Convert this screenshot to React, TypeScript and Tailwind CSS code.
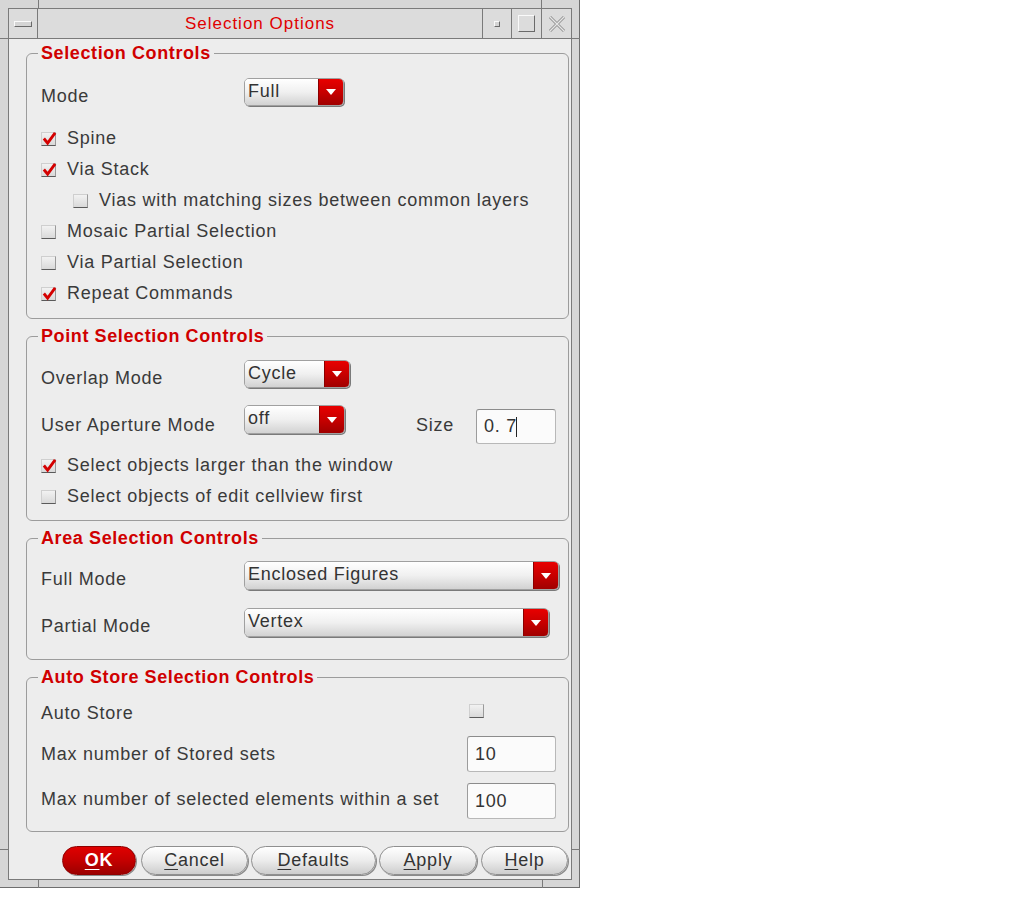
import React from "react";

const font = "font-['Liberation_Sans',Arial,sans-serif]";
const label = "text-[18px] leading-[21px] tracking-[0.75px] text-[#3a3a3a]";
const heading = "text-[18px] leading-[20px] font-bold tracking-[0.6px] text-[#d00000]";

function Check({ checked }: { checked?: boolean }) {
  return (
    <span className="relative inline-block w-[15px] h-[14px] shrink-0 bg-gradient-to-b from-[#f2f2f2] to-[#d9d9d9] border border-[#cfcfcf] border-b-[#5a5a5a] border-r-[#9a9a9a]">
      {checked && (
        <svg
          className="absolute left-[0px] top-[-2px]"
          width="15"
          height="15"
          viewBox="0 0 16 16"
        >
          <path
            d="M2 8 L6 13 L14 2"
            fill="none"
            stroke="#d40000"
            strokeWidth="3"
            strokeLinejoin="miter"
          />
        </svg>
      )}
    </span>
  );
}

function CheckRow({
  text,
  checked,
  indent,
}: {
  text: string;
  checked?: boolean;
  indent?: boolean;
}) {
  return (
    <div className={"flex items-center h-[31px] " + (indent ? "pl-[32px]" : "")}>
      <Check checked={checked} />
      <span className={label + " ml-[11px]"}>{text}</span>
    </div>
  );
}

function Dropdown({ text, className }: { text: string; className: string }) {
  return (
    <div
      className={
        "flex shrink-0 rounded-[5px] border border-[#a0a0a0] shadow-[1px_1px_0_#7a7a7a] overflow-hidden " +
        className
      }
    >
      <div className="flex-1 flex items-center pl-[3px] pb-[2px] bg-gradient-to-b from-[#ffffff] via-[#f0f0f0] to-[#d2d2d2]">
        <span className="text-[18px] leading-[21px] tracking-[0.75px] text-[#333]">
          {text}
        </span>
      </div>
      <div className="w-[25px] flex items-center justify-center bg-gradient-to-b from-[#e80000] via-[#c80000] to-[#a00000] border-l border-[#8a0000]">
        <svg width="10" height="6" viewBox="0 0 10 6">
          <path d="M0 0 H10 L5 6 Z" fill="#ffffff" />
        </svg>
      </div>
    </div>
  );
}

function Field({ text, className }: { text: string; className: string }) {
  return (
    <div
      className={
        "flex items-center pl-[7px] shrink-0 rounded-[3px] bg-[#fbfbfb] border border-[#b8b8b8] border-t-[#8c8c8c] border-l-[#9c9c9c] " +
        className
      }
    >
      <span className="text-[18px] leading-[21px] tracking-[0.75px] text-[#333]">
        {text}
      </span>
    </div>
  );
}

function Group({
  title,
  className,
  children,
}: {
  title: string;
  className: string;
  children: React.ReactNode;
}) {
  return (
    <fieldset
      className={
        "ml-[17px] w-[543px] border border-[#9c9c9c] rounded-[6px] pl-[11px] " +
        className
      }
    >
      <legend className={heading + " px-[3px]"}>{title}</legend>
      <div className="pl-[3px]">{children}</div>
    </fieldset>
  );
}

function PushButton({
  first,
  rest,
  className,
  primary,
}: {
  first: string;
  rest: string;
  className: string;
  primary?: boolean;
}) {
  return (
    <div
      className={
        "h-[29px] rounded-full flex items-center justify-center border shadow-[1px_1px_0_#8a8a8a] " +
        (primary
          ? "bg-gradient-to-b from-[#e00000] via-[#c40000] to-[#9c0000] border-[#900000] text-white font-bold "
          : "bg-gradient-to-b from-[#ffffff] via-[#ececec] to-[#cdcdcd] border-[#8f8f8f] text-[#333] ") +
        className
      }
    >
      <span className="text-[18px] leading-[21px] tracking-[0.75px]">
        <span className="underline underline-offset-[3px]">{first}</span>
        {rest}
      </span>
    </div>
  );
}

export default function App() {
  return (
    <div className={"w-[1012px] h-[901px] bg-white " + font}>
      <div className="relative w-[580px] h-[888px] bg-[#d6d6d6] border-r border-b border-[#6e6e6e] pt-[8px] pl-[8px] pr-[7px] pb-[7px]">
        {/* resize corner marks on the frame */}
        <span className="absolute left-[38px] top-0 w-px h-[8px] bg-[#7a7a7a]" />
        <span className="absolute left-0 top-[38px] w-[8px] h-px bg-[#7a7a7a]" />
        <span className="absolute left-[541px] top-0 w-px h-[8px] bg-[#7a7a7a]" />
        <span className="absolute left-[572px] top-[38px] w-[8px] h-px bg-[#7a7a7a]" />
        <span className="absolute left-0 top-[849px] w-[8px] h-px bg-[#7a7a7a]" />
        <span className="absolute left-[38px] top-[880px] w-px h-[8px] bg-[#7a7a7a]" />
        <span className="absolute left-[542px] top-[880px] w-px h-[8px] bg-[#7a7a7a]" />
        <span className="absolute left-[572px] top-[849px] w-[8px] h-px bg-[#7a7a7a]" />

        <div className="h-full border border-[#7a7a7a] flex flex-col">
          {/* title bar */}
          <div className="h-[30px] shrink-0 flex border-b border-[#7a7a7a] bg-[#dcdcdc]">
            <div className="w-[29px] border-r border-[#7a7a7a] flex items-center justify-center">
              <span className="w-[18px] h-[6px] bg-[#d4d4d4] border border-[#fafafa] border-b-[#6a6a6a] border-r-[#6a6a6a]" />
            </div>
            <div className="flex-1 flex items-center justify-center">
              <span className="text-[17px] leading-[20px] tracking-[1px] text-[#e00000]">
                Selection Options
              </span>
            </div>
            <div className="w-[29px] border-l border-[#7a7a7a] flex items-center justify-center">
              <span className="w-[6px] h-[6px] bg-[#d4d4d4] border border-[#fafafa] border-b-[#6a6a6a] border-r-[#6a6a6a]" />
            </div>
            <div className="w-[30px] border-l border-[#7a7a7a] flex items-center justify-center">
              <span className="w-[17px] h-[17px] border border-[#fafafa] border-b-[#6a6a6a] border-r-[#6a6a6a]" />
            </div>
            <div className="w-[30px] border-l border-[#7a7a7a] flex items-center justify-center">
              <svg width="20" height="20" viewBox="0 0 20 20">
                <path d="M3 3 L17 17 M17 3 L3 17" stroke="#8c8c8c" strokeWidth="3" />
                <path d="M3 3 L17 17 M17 3 L3 17" stroke="#e6e6e6" strokeWidth="1.4" />
              </svg>
            </div>
          </div>

          {/* form body */}
          <div className="flex-1 bg-[#ededed] pt-[4px] flex flex-col">
            <Group title="Selection Controls" className="pb-[9px]">
              <div className="flex items-start h-[28px] mt-[15px]">
                <span className={label + " w-[203px] mt-[8px]"}>Mode</span>
                <Dropdown text="Full" className="w-[100px] h-[28px]" />
              </div>
              <div className="mt-[17px]">
                <CheckRow text="Spine" checked />
                <CheckRow text="Via Stack" checked />
                <CheckRow
                  text="Vias with matching sizes between common layers"
                  indent
                />
                <CheckRow text="Mosaic Partial Selection" />
                <CheckRow text="Via Partial Selection" />
                <CheckRow text="Repeat Commands" checked />
              </div>
            </Group>

            <Group title="Point Selection Controls" className="mt-[7px] pb-[8px]">
              <div className="flex items-start h-[28px] mt-[14px]">
                <span className={label + " w-[203px] mt-[8px]"}>Overlap Mode</span>
                <Dropdown text="Cycle" className="w-[106px] h-[28px]" />
              </div>
              <div className="flex items-start h-[39px] mt-[17px]">
                <span className={label + " w-[203px] mt-[10px]"}>
                  User Aperture Mode
                </span>
                <Dropdown text="off" className="w-[101px] h-[29px]" />
                <span className={label + " w-[60px] ml-[71px] mt-[10px]"}>Size</span>
                <div className="mt-[4px] relative">
                  <Field text="0. 7" className="w-[80px] h-[35px]" />
                  <span className="absolute left-[40px] top-[8px] w-px h-[20px] bg-[#222]" />
                </div>
              </div>
              <div className="mt-[6px]">
                <CheckRow text="Select objects larger than the window" checked />
                <CheckRow text="Select objects of edit cellview first" />
              </div>
            </Group>

            <Group title="Area Selection Controls" className="mt-[7px] pb-[22px]">
              <div className="flex items-start h-[29px] mt-[13px]">
                <span className={label + " w-[203px] mt-[8px]"}>Full Mode</span>
                <Dropdown text="Enclosed Figures" className="w-[315px] h-[29px]" />
              </div>
              <div className="flex items-start h-[29px] mt-[18px]">
                <span className={label + " w-[203px] mt-[8px]"}>Partial Mode</span>
                <Dropdown text="Vertex" className="w-[305px] h-[29px]" />
              </div>
            </Group>

            <Group title="Auto Store Selection Controls" className="mt-[7px] pb-[12px]">
              <div className="flex items-start h-[24px] mt-[13px]">
                <span className={label + " w-[426px] mt-[3px]"}>Auto Store</span>
                <div className="ml-[2px] mt-[4px] flex">
                  <Check />
                </div>
              </div>
              <div className="flex items-start h-[36px] mt-[12px]">
                <span className={label + " w-[426px] mt-[8px]"}>
                  Max number of Stored sets
                </span>
                <Field text="10" className="w-[89px] h-[36px]" />
              </div>
              <div className="flex items-start h-[36px] mt-[11px]">
                <span className={label + " w-[426px] mt-[6px]"}>
                  Max number of selected elements within a set
                </span>
                <Field text="100" className="w-[89px] h-[36px]" />
              </div>
            </Group>

            <div className="flex mt-[14px] pl-[53px]">
              <PushButton first="O" rest="K" primary className="w-[74px]" />
              <PushButton first="C" rest="ancel" className="w-[107px] ml-[5px]" />
              <PushButton first="D" rest="efaults" className="w-[125px] ml-[3px]" />
              <PushButton first="A" rest="pply" className="w-[98px] ml-[3px]" />
              <PushButton first="H" rest="elp" className="w-[87px] ml-[4px]" />
            </div>
          </div>
        </div>
      </div>
    </div>
  );
}
